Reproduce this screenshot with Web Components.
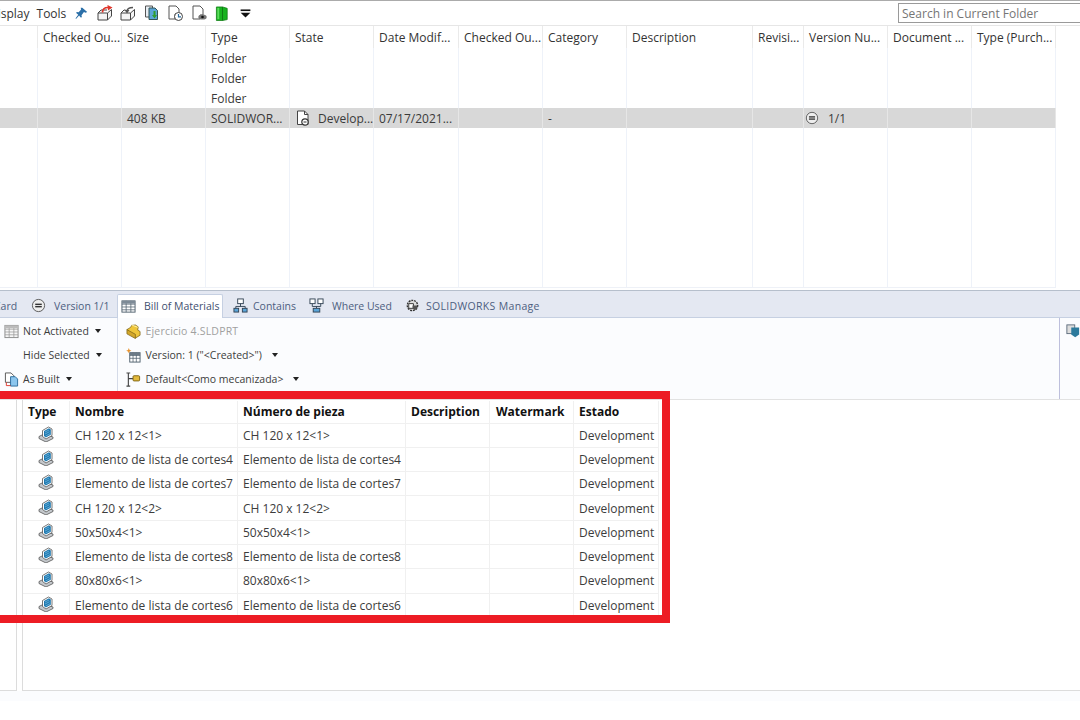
<!DOCTYPE html>
<html>
<head>
<meta charset="utf-8">
<title>Bill of Materials</title>
<style>
	html, body { margin: 0; padding: 0; background: #fff; }
	body { width: 1080px; height: 720px; overflow: hidden; position: relative; font-family: "Open Sans", "Noto Sans", sans-serif; }
	pdm-app { width: 1080px; height: 720px; }
</style>
</head>
<body>
<pdm-app></pdm-app>

<script>
// Icons are kept in one place, every one is drawn on a 16x16 box
const ICONS = {
	pin: `<path d="M9 1l6 5-2 1-2-1-3 4 .5 2.500-1.500.5-2-2.500-3.500 4-1-.5 3.500-4.500-2.500-2 .5-1.500 2.500.5 3-3.500-.5-2z" fill="#2b6fa8"/>`,
	boxOut: `<path d="M1 8h9.500v7H1zM1 8l3-3h6M10.500 8l4-3.500V11l-4 4" fill="#f4f4f4" stroke="#444" stroke-width="1"/><path d="M5.500 7.500c0-3.500 2-5 5.500-5" fill="none" stroke="#e0362c" stroke-width="1.700"/><path d="M10.500 0l5 2.500-4.500 3z" fill="#e0362c"/>`,
	boxIn: `<path d="M1 8h9.500v7H1zM1 8l3-3h1.500M10.500 8l4-3.500V11l-4 4" fill="#f4f4f4" stroke="#444" stroke-width="1"/><path d="M13 2.500c-3.500 0-6 1-6 4" fill="none" stroke="#555" stroke-width="1.500"/><path d="M4.500 5l2.500 3.500 2.500-3.500z" fill="#555"/>`,
	docCopy: `<path d="M1.500 1h7l0 11h-7z" fill="#e8eef4" stroke="#555"/><path d="M5 3h6l2.500 2.500v9h-8.500z" fill="#5aa5d8" stroke="#355"/><path d="M9.500 6h2v4h1.500l-2.500 3.500-2.500-3.500h1.500z" fill="#2f9e2f"/>`,
	docClock: `<path d="M2 1h7l3 3v5h-4v5h-6z" fill="#fff" stroke="#555"/><circle cx="11.500" cy="11.500" r="4" fill="#fff" stroke="#444"/><path d="M11.500 9v2.800h2.500" fill="none" stroke="#2c6c9c" stroke-width="1.200"/>`,
	docEye: `<path d="M2 1h7l3 3v6h-3v4h-7z" fill="#fff" stroke="#555"/><ellipse cx="11.500" cy="12" rx="4.200" ry="2.600" fill="#777"/><circle cx="11.500" cy="12" r="1.300" fill="#111"/>`,
	book: `<path d="M1.500 1h6.500l5 1.500v12l-5 1h-6.500z" fill="#17b31e" stroke="#0d7a12" stroke-width=".8"/><path d="M8 1v14.500" stroke="#0d7a12" stroke-width="1"/><path d="M2.500 2h2v12h-2z" fill="#5fdc5f"/>`,
	menu: `<rect x="2" y="3" width="12" height="2" fill="#111"/><path d="M2 7h12l-6 6z" fill="#111"/>`,
	state: `<path d="M2.500 1h7l3.500 3.500v10h-10.500z" fill="#fff" stroke="#444"/><path d="M9.500 1v3.500h3.500" fill="none" stroke="#444"/><circle cx="10" cy="12" r="3.200" fill="#fff" stroke="#333" stroke-width="1.200"/><path d="M8.500 12h3" stroke="#333"/>`,
	version: `<circle cx="8" cy="8" r="6.500" fill="#eee" stroke="#555"/><rect x="4.500" y="6" width="7" height="1.500" fill="#333"/><rect x="4.500" y="8.500" width="7" height="1.500" fill="#333"/>`,
	grid: `<rect x="1" y="2" width="14" height="12" fill="#fff" stroke="#50606e"/><path d="M1 5.500h14M1 8.500h14M1 11.500h14M5.500 2v12M10.500 2v12" stroke="#50606e" stroke-width=".8"/><rect x="1" y="2" width="14" height="3" fill="#7d8a96"/>`,
	gridLight: `<rect x="1" y="1.500" width="14" height="13" fill="#f6f6f6" stroke="#8a8a8a"/><path d="M1 5.500h14M1 8.500h14M1 11.500h14M5.500 1.500v13M10.500 1.500v13" stroke="#9a9a9a" stroke-width=".8"/><rect x="1" y="1.500" width="14" height="3" fill="#bbb"/>`,
	contains: `<rect x="5" y="1" width="6" height="5" fill="#fff" stroke="#345"/><path d="M8 6v3M3 12V9h10v3" fill="none" stroke="#345"/><rect x="1" y="11" width="5" height="4" fill="#5aa5d8" stroke="#345"/><rect x="10" y="11" width="5" height="4" fill="#5aa5d8" stroke="#345"/>`,
	whereUsed: `<rect x="1" y="1" width="5.500" height="5" fill="#fff" stroke="#345"/><rect x="9.500" y="1" width="5.500" height="5" fill="#fff" stroke="#345"/><path d="M3.500 6v3h9V6M8 9v2" fill="none" stroke="#345"/><rect x="4.500" y="11" width="7" height="4" fill="#5aa5d8" stroke="#345"/>`,
	manage: `<circle cx="8" cy="8" r="5.500" fill="#ddd" stroke="#333" stroke-width="1.500" stroke-dasharray="2 1"/><path d="M4 6h5v5h-5z" fill="#fff" stroke="#333"/><path d="M8 8h5v3l-3 2-2-2z" fill="#555"/>`,
	part: `<path d="M1 6l4-2.500 1-2 4-.5 3 2-.5 3.500 2.500 1.500v4l-5 3z" fill="#eec53a" stroke="#7f6415" stroke-width=".8"/><path d="M1 6l9 5v4.500l-9-5z" fill="#d3a72a" stroke="#7f6415" stroke-width=".8"/><path d="M6 1l6.500 2.500" stroke="#fff2a8" stroke-width="1"/>`,
	version2: `<rect x="4" y="5" width="11" height="10" fill="#fff" stroke="#50606e"/><path d="M4 8h11M4 11h11M7.500 5v10M11 5v10" stroke="#50606e" stroke-width=".8"/><rect x="4" y="5" width="11" height="2.500" fill="#6c7a86"/><path d="M3 0l.8 2 2 .8-2 .8-.8 2-.8-2-2-.8 2-.8z" fill="#e8912a"/>`,
	config: `<path d="M2.500 1v14M.5 1h4M.5 15h4M2.500 7h5" fill="none" stroke="#444" stroke-width="1.200"/><rect x="7.500" y="4" width="7" height="5.500" rx="1" fill="#e2b93b" stroke="#7f6415"/>`,
	asBuilt: `<path d="M1.500 1h6l3 3v7h-9z" fill="#fff" stroke="#555"/><path d="M7 5h5l2.500 2.500v7.500h-7.500z" fill="#8cc6ee" stroke="#2c6c9c"/><path d="M2.500 11v3.500h4.500" fill="none" stroke="#e0362c"/>`,
	panel: `<rect x="1" y="1" width="9" height="10" fill="#ddd" stroke="#567"/><path d="M6 4h9v8l-4.500 3L6 12z" fill="#2c7a9c"/>`,
	bomPart: `<path d="M1 10.500l5-2.500 9 3v1.500l-7 3.500-7-3.500z" fill="#c4c8cc" stroke="#555" stroke-width=".8"/><path d="M4.500 4.500L10.500 1l3.500 2v6.500l-6 3.500-3.500-2.500z" fill="#fff" stroke="#555" stroke-width=".8"/><path d="M6 5l5-2.800 1.800 1.200v5.300l-5 2.800L6 10z" fill="#1f79b0"/><path d="M7 6l4-2M7 8l4.500-2.300M7.500 10l4.500-2.300" stroke="#6db4dc" stroke-width=".8"/>`
};

function icon(name, size) {
	const s = size || 16;
	return `<svg width="${s}" height="${s}" viewBox="0 0 16 16" style="display:block;flex:none">${ICONS[name]}</svg>`;
}

// Row of toolbar icons above the file list
class PdmToolbar extends HTMLElement {
	constructor() {
		super();
		const root = this.attachShadow({ mode: 'open' });
		const items = [['pin', 75, 13], ['boxOut', 97, 16], ['boxIn', 120, 16], ['docCopy', 144, 16], ['docClock', 167, 16], ['docEye', 191, 16], ['book', 215, 15], ['menu', 239, 13]];
		root.innerHTML = `
		<style>
			:host { display: flex; align-items: center; height: 26px; box-sizing: border-box; border-top: 1px solid #ababab; border-bottom: 1px solid #e6e6e6; color: #333; font-size: 12px; }
			.menu { display: flex; gap: 7px; margin-left: -11px; width: 86px; flex: none; }
			.icons { display: flex; align-items: center; gap: 0; width: 180px; flex: none; }
			.spacer { flex: 1; }
			input { width: 184px; height: 20px; box-sizing: border-box; margin-right: -2px; border: 1px solid #9a9a9a; padding: 0 3px; font: inherit; font-size: 12px; outline: none; }
			input::placeholder { color: #757575; opacity: 1; }
		</style>
		<div class="menu"><span>Display</span><span>Tools</span></div>
		<div class="icons"></div>
		<div class="spacer"></div>
		<input placeholder="Search in Current Folder">`;
		let x = 75;
		const icons = root.querySelector('.icons');
		items.forEach(([name, left, size]) => {
			const wrap = document.createElement('span');
			wrap.style.marginLeft = (left - x) + 'px';
			wrap.innerHTML = icon(name, size);
			icons.appendChild(wrap);
			x = left + size;
		});
	}
}

// Upper file list, a grid whose last row stretches so column lines run to the bottom
class FileList extends HTMLElement {
	constructor() {
		super();
		const root = this.attachShadow({ mode: 'open' });
		const head = ['', 'Checked Ou...', 'Size', 'Type', 'State', 'Date Modif...', 'Checked Ou...', 'Category', 'Description', 'Revisi...', 'Version Nu...', 'Document ...', 'Type (Purch...'];
		const rows = [
			['', '', '', 'Folder'],
			['', '', '', 'Folder'],
			['', '', '', 'Folder'],
			['', '', '408 KB', 'SOLIDWOR...', 'STATE', '07/17/2021...', '', '-', '', '', 'VERSION', '', ''],
			[]
		];
		let html = head.map(t => `<div class="c head">${t}</div>`).join('');
		rows.forEach((row, r) => {
			for (let i = 0; i < 13; i++) {
				let t = row[i] || '';
				if (t === 'STATE') t = `<span class="ic">${icon('state', 16)}</span><span>Develop...</span>`;
				if (t === 'VERSION') t = `<span class="vic">${icon('version', 14)}</span><span>1/1</span>`;
				html += `<div class="c${r === 3 ? ' sel' : ''}">${t}</div>`;
			}
		});
		root.innerHTML = `
		<style>
			:host { display: grid; width: 1056px; height: 262px; box-sizing: border-box; border-bottom: 1px solid #eef1f7;
				grid-template-columns: 38px 84px 84px 84px 84px 85px 84px 84px 126px 51px 84px 84px 84px;
				grid-template-rows: 22px 20px 20px 20px 20px 1fr; color: #3a3a3a; font-size: 12px; }
			.c { border-right: 1px solid #eef2f9; padding-left: 5px; display: flex; align-items: center; white-space: nowrap; overflow: hidden; min-width: 0; }
			.head { border-right-color: #eaeaea; color: #333; }
			.sel { background: #d8d8d8; border-right-color: #e6e6e6; }
			.ic { margin-right: 7px; display: block; }
			.vic { margin: 0 9px 0 -4px; display: block; }
		</style>${html}`;
	}
}

// One tab of the details strip: icon in the slot, label as content
class PdmTab extends HTMLElement {
	constructor() {
		super();
		this.attachShadow({ mode: 'open' }).innerHTML = `
		<style>
			:host { display: flex; align-items: center; height: 26px; box-sizing: border-box; padding-top: 3px; color: #4d5e80; font-size: 10.500px; white-space: nowrap; }
			:host([active]) { background: #fff; border: 1px solid #c6d0e2; border-bottom: 0; height: 24px; margin-top: 3px; padding: 0 0 1px 3px; border-radius: 2px 2px 0 0; position: relative; top: 0; color: #3f5070; }
			::slotted([slot="icon"]) { margin-right: var(--icon-gap, 8px); }
		</style>
		<slot name="icon"></slot><slot></slot>`;
	}
}

class DetailTabs extends HTMLElement {
	constructor() {
		super();
		// icon, label, left margin, box width, gap after the icon, active
		const tabs = [
			['', 'Card', -6, 37, 0, 0],
			['version', 'Version 1/1', 0, 86, 8, 0],
			['grid', 'Bill of Materials', 0, 106, 8, 1],
			['contains', 'Contains', 10, 76, 5, 0],
			['whereUsed', 'Where Used', 0, 96, 8, 0],
			['manage', 'SOLIDWORKS Manage', 0, 150, 6, 0]
		];
		const root = this.attachShadow({ mode: 'open' });
		root.innerHTML = `
		<style>
			:host { display: flex; height: 28px; box-sizing: border-box; margin-top: 2px; background: #e4e8f2; border-top: 1px solid #b6bfcc; border-bottom: 1px solid #c6d0e2; }
			pdm-tab { flex: none; }
			.wide { letter-spacing: .32px; }
		</style>`;
		tabs.forEach(([ic, label, left, width, iconGap, active]) => {
			const tab = document.createElement('pdm-tab');
			if (active) tab.setAttribute('active', '');
			tab.style.marginLeft = left + 'px';
			tab.style.width = width + 'px';
			tab.style.setProperty('--icon-gap', iconGap + 'px');
			if (label.startsWith('SOLID')) tab.className = 'wide';
			if (ic) {
				const s = document.createElement('span');
				s.slot = 'icon';
				s.innerHTML = icon(ic, 15);
				tab.appendChild(s);
			}
			tab.appendChild(document.createTextNode(label));
			root.appendChild(tab);
		});
	}
}

// Line in the options ribbon: optional icon, label and optional drop arrow
class OptionLine extends HTMLElement {
	constructor() {
		super();
		const ic = this.getAttribute('icon');
		this.attachShadow({ mode: 'open' }).innerHTML = `
		<style>
			:host { display: flex; align-items: center; height: 24px; color: #3c3c3c; font-size: 10.500px; white-space: nowrap; }
			:host([muted]) { color: #a0a0a0; letter-spacing: .2px; }
			.slot-ic { width: 15px; margin-right: 4px; flex: none; }
			.arrow { width: 0; height: 0; border: 3.500px solid transparent; border-top: 4px solid #222; border-bottom: 0; margin-left: var(--arrow, 6px); }
			:host([muted]) .arrow { display: none; }
		</style>
		<span class="slot-ic">${ic ? icon(ic, 15) : ''}</span><slot></slot><span class="arrow"></span>`;
	}
}

class BomOptions extends HTMLElement {
	constructor() {
		super();
		this.attachShadow({ mode: 'open' }).innerHTML = `
		<style>
			:host { display: flex; height: 82px; box-sizing: border-box; background: #fbfcfe; border-bottom: 1px solid #e2e2e2; }
			.col { display: flex; flex-direction: column; box-sizing: border-box; padding-top: 1px; }
			.a { width: 119px; padding-left: 4px; border-right: 1px solid #d5dbe8; }
			.b { width: 946px; padding-left: 8px; border-right: 1px solid #bdbfdc; --arrow: 10px; }
			.c { padding: 6px 0 0 6px; }
		</style>
		<div class="col a">
			<option-line icon="gridLight">Not Activated</option-line>
			<option-line>Hide Selected</option-line>
			<option-line icon="asBuilt">As Built</option-line>
		</div>
		<div class="col b">
			<option-line icon="part" muted>Ejercicio 4.SLDPRT</option-line>
			<option-line icon="version2">Version: 1 ("&lt;Created&gt;")</option-line>
			<option-line icon="config">Default&lt;Como mecanizada&gt;</option-line>
		</div>
		<div class="col c">${icon('panel', 14)}</div>`;
	}
}

// Bill of materials grid, rows come from the data setter
class BomTable extends HTMLElement {
	constructor() {
		super();
		this.attachShadow({ mode: 'open' }).innerHTML = `
		<style>
			:host { display: grid; width: 636px; margin-top: 1px; grid-template-columns: 47px 168px 168px 84px 84px 85px; grid-template-rows: 22.500px; grid-auto-rows: 24.300px; font-size: 12px; color: #3c3c3c; }
			.c { display: flex; align-items: center; padding-left: 5px; border-right: 1px solid #f0f0f0; border-bottom: 1px solid #f0f0f0; white-space: nowrap; overflow: hidden; min-width: 0; }
			.c:nth-child(6n) { padding-left: 6px; }
			.h { font-weight: 700; color: #111; }
			.t { justify-content: center; padding: 0 0 3px 0; }
		</style>`;
	}
	set data(data) {
		const root = this.shadowRoot;
		const add = (cls, html) => {
			const d = document.createElement('div');
			d.className = cls;
			d.innerHTML = html;
			root.appendChild(d);
		};
		data.head.forEach(h => add('c h', h));
		data.rows.forEach(r => {
			add('c t', icon('bomPart', 16));
			add('c', r[0]);
			add('c', r[0]);
			add('c', '');
			add('c', '');
			add('c', 'Development');
		});
	}
}

// Red rectangle someone drew over the screenshot
class RedMark extends HTMLElement {
	constructor() {
		super();
		this.attachShadow({ mode: 'open' }).innerHTML = `
		<style>
			:host { display: block; position: absolute; left: -20px; top: 391px; width: 690px; height: 232px; box-sizing: border-box; border: 8px solid #ed1c24; pointer-events: none; }
		</style>`;
	}
}

class PdmApp extends HTMLElement {
	constructor() {
		super();
		this.attachShadow({ mode: 'open' }).innerHTML = `
		<style>
			:host { display: flex; flex-direction: column; position: relative; background: #fff; }
			.lower { display: flex; height: 291px; gap: 5px; }
			.side { width: 17px; box-sizing: border-box; border-right: 1px solid #dcdcdc; border-bottom: 1px solid #dcdcdc; }
			.main { flex: 1; border-left: 1px solid #dcdcdc; border-bottom: 1px solid #dcdcdc; background: #fff; }
			.foot { height: 10px; background: #fbfcfe; }
		</style>
		<pdm-toolbar></pdm-toolbar>
		<file-list></file-list>
		<detail-tabs></detail-tabs>
		<bom-options></bom-options>
		<div class="lower">
			<div class="side"></div>
			<div class="main"><bom-table></bom-table></div>
		</div>
		<div class="foot"></div>
		<red-mark></red-mark>`;
		this.shadowRoot.querySelector('bom-table').data = {
			head: ['Type', 'Nombre', 'Número de pieza', 'Description', 'Watermark', 'Estado'],
			rows: [
				['CH 120 x 12&lt;1&gt;'],
				['Elemento de lista de cortes4'],
				['Elemento de lista de cortes7'],
				['CH 120 x 12&lt;2&gt;'],
				['50x50x4&lt;1&gt;'],
				['Elemento de lista de cortes8'],
				['80x80x6&lt;1&gt;'],
				['Elemento de lista de cortes6']
			]
		};
	}
}

customElements.define('pdm-toolbar', PdmToolbar);
customElements.define('file-list', FileList);
customElements.define('pdm-tab', PdmTab);
customElements.define('detail-tabs', DetailTabs);
customElements.define('option-line', OptionLine);
customElements.define('bom-options', BomOptions);
customElements.define('bom-table', BomTable);
customElements.define('red-mark', RedMark);
customElements.define('pdm-app', PdmApp);
</script>
</body>
</html>
